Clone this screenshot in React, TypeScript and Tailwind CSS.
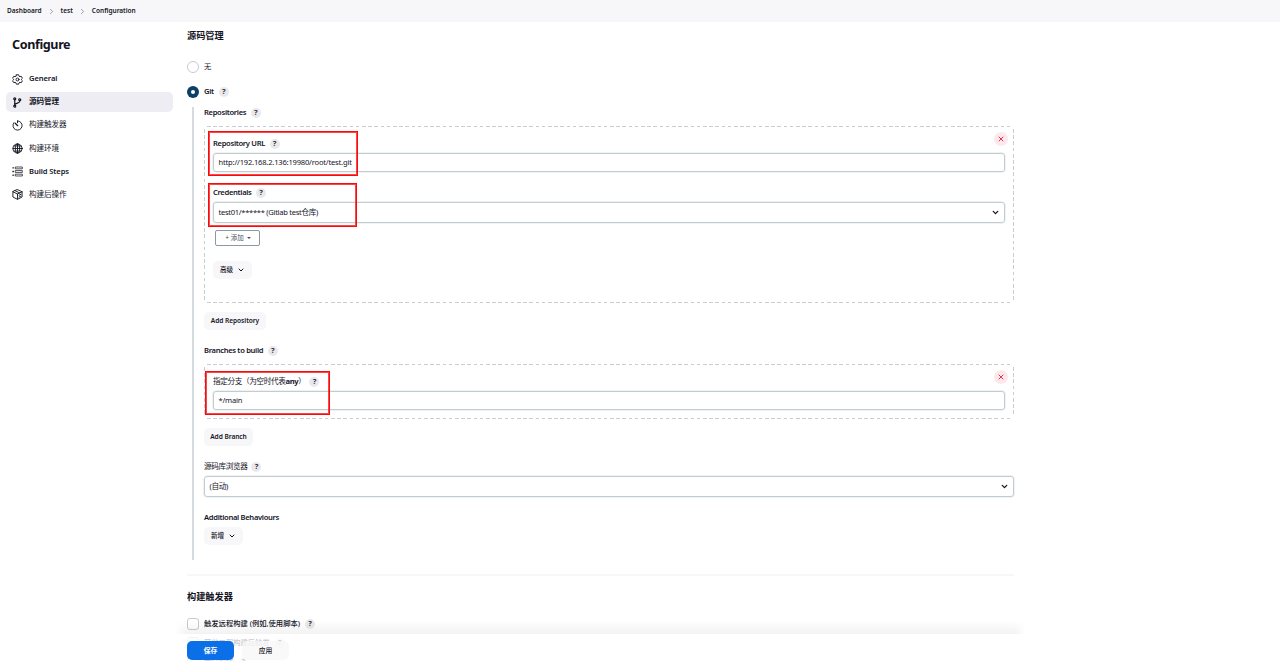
import type { ReactNode } from 'react'
import clsx from 'clsx'
import { ChevronDown, ChevronRight, X } from 'lucide-react'

const NAV_ITEMS = [
  { label: 'General', icon: 'gear', weight: 'font-semibold' },
  { label: '源码管理', icon: 'branch', weight: 'font-bold', active: true },
  { label: '构建触发器', icon: 'timer', weight: 'font-normal' },
  { label: '构建环境', icon: 'globe', weight: 'font-normal' },
  { label: 'Build Steps', icon: 'list', weight: 'font-semibold' },
  { label: '构建后操作', icon: 'cube', weight: 'font-normal' },
]

function NavIcon({ name }: { name: string }) {
  return (
    <svg
      viewBox="0 0 24 24"
      className="size-[11px] shrink-0"
      fill="none"
      stroke="currentColor"
      strokeWidth="2"
      strokeLinecap="round"
      strokeLinejoin="round"
    >
      {name === 'gear' && (
        <>
          <path d="M9.5 1.8h5l.8 3 2 1.1 3-.8 2.4 4.2-2.2 2.1v1.2l2.2 2.1-2.4 4.2-3-.8-2 1.1-.8 3h-5l-.8-3-2-1.1-3 .8-2.4-4.2 2.2-2.1v-1.2L1.3 9.3l2.4-4.2 3 .8 2-1.1z" />
          <circle cx="12" cy="12" r="3.2" />
        </>
      )}
      {name === 'branch' && (
        <g strokeWidth="2.6">
          <circle cx="6" cy="4" r="2.2" />
          <circle cx="6" cy="20" r="2.2" />
          <circle cx="17" cy="6" r="2.2" />
          <path d="M6 6.5v11M17 8.500c0 5-6 4-10.500 7.500" />
        </g>
      )}
      {name === 'timer' && (
        <>
          <path d="M12 2a10 10 0 1 1-8 4" />
          <path d="M12 2v4" />
          <path d="M7 7l5.5 5.5" strokeWidth="2.6" />
        </>
      )}
      {name === 'globe' && (
        <>
          <circle cx="12" cy="12" r="10" />
          <ellipse cx="12" cy="12" rx="4.8" ry="10" />
          <path d="M12 2v20M2 12h20M4 6.5h16M4 17.5h16" />
        </>
      )}
      {name === 'list' && (
        <>
          <path d="M2 4h1M2 12h1M2 20h1" strokeWidth="2.8" />
          <rect x="8" y="2.2" width="14.5" height="4" strokeWidth="1.6" />
          <rect x="8" y="10" width="14.5" height="4" strokeWidth="1.6" />
          <rect x="8" y="17.8" width="14.5" height="4" strokeWidth="1.6" />
        </>
      )}
      {name === 'cube' && (
        <>
          <path d="M12 1.5 22 6v11.5L12 22.500 2 17.500V6z" />
          <path d="M2 6l10 5 10-5M12 11v11M7 3.8l10 5M15.5 13.5l4-2M15.5 17.5l4-2" />
        </>
      )}
    </svg>
  )
}

function Help() {
  return (
    <span className="flex size-[10px] shrink-0 items-center justify-center rounded-full bg-[#e9e9ec] text-[7.5px] leading-none font-bold tracking-normal text-[#33333f]">
      ?
    </span>
  )
}

function Label({ children, help, cjk, className }: { children: ReactNode; help?: boolean; cjk?: boolean; className?: string }) {
  return (
    <div
      className={clsx(
        'flex h-[10px] items-center text-[7.6px] leading-none whitespace-nowrap',
        cjk ? 'gap-[4px] font-normal tracking-[-0.35px]' : 'gap-[4.5px] font-semibold tracking-[-0.32px]',
        className,
      )}
    >
      <span>{children}</span>
      {help && <Help />}
    </div>
  )
}

function Field({ children, select, className }: { children: ReactNode; select?: boolean; className?: string }) {
  return (
    <div
      className={clsx(
        'flex items-center justify-between rounded-[3px] border border-[#c3ccd1] pl-[4.5px] text-[7.6px] leading-none shadow-[0_0_0_0.5px_#dfe5e8]',
        select ? 'h-[21px] pr-[4px] tracking-[-0.3px]' : 'h-[19px] tracking-[-0.2px]',
        className,
      )}
    >
      <span>{children}</span>
      {select && <ChevronDown size={9} strokeWidth={3.5} />}
    </div>
  )
}

function GreyButton({ children, chevron, className }: { children: ReactNode; chevron?: boolean; className?: string }) {
  return (
    <button
      className={clsx(
        'flex h-[18px] items-center justify-center gap-[4px] rounded-[5px] bg-[#f7f7f9] text-[6.6px] leading-none whitespace-nowrap',
        chevron ? 'font-medium' : 'font-semibold tracking-[-0.05px]',
        className,
      )}
    >
      <span className="pt-px">{children}</span>
      {chevron && <ChevronDown size={8} strokeWidth={3} />}
    </button>
  )
}

// 6px dash rhythm on all four sides
function DashedBox({ children, className }: { children: ReactNode; className?: string }) {
  return (
    <div
      className={clsx(
        'relative px-[9px]',
        'bg-[repeating-linear-gradient(90deg,#c6ced3_0_3.7px,transparent_3.7px_6.2px),repeating-linear-gradient(90deg,#c6ced3_0_3.7px,transparent_3.7px_6.2px),repeating-linear-gradient(180deg,#c6ced3_0_3.7px,transparent_3.7px_6.2px),repeating-linear-gradient(180deg,#c6ced3_0_3.7px,transparent_3.7px_6.2px)]',
        'bg-[length:calc(100%-6px)_1px,calc(100%-6px)_1px,1px_calc(100%-6px),1px_calc(100%-6px)] bg-[position:3px_0,3px_100%,0_3px,100%_3px] bg-no-repeat',
        className,
      )}
    >
      <button className="absolute top-[6px] right-[6.5px] flex size-[14px] items-center justify-center rounded-full bg-[#fde8ec] text-[#e6324f]">
        <X size={8} strokeWidth={3} />
      </button>
      {children}
    </div>
  )
}

function Highlight({ className }: { className: string }) {
  return <div className={clsx('pointer-events-none absolute border border-[#fa0a0a] shadow-[inset_0_0_0_1px_rgba(250,10,10,0.75)]', className)} />
}

export default function App() {
  return (
    <div className="relative flex h-[661px] w-[1280px] flex-col overflow-hidden bg-white font-['Noto_Sans','Noto_Sans_CJK_SC',sans-serif] text-[#14141f]">
      <header className="flex h-[22px] shrink-0 items-center gap-[5px] bg-[#f7f7f9] pl-[7px] text-[6.5px] leading-none font-semibold">
        <span>Dashboard</span>
        <ChevronRight size={9} strokeWidth={1.8} className="text-[#777785]" />
        <span>test</span>
        <ChevronRight size={9} strokeWidth={1.8} className="text-[#777785]" />
        <span>Configuration</span>
      </header>

      <div className="flex min-h-0 flex-1">
        <aside className="w-[187px] shrink-0 pl-[6px]">
          <h1 className="mt-[16px] pl-[6px] text-[12.6px] leading-[14px] font-bold tracking-[-0.4px]">Configure</h1>
          <nav className="mt-[17px] flex w-[167px] flex-col gap-[3px]">
            {NAV_ITEMS.map((item) => (
              <a
                key={item.label}
                className={clsx(
                  'flex h-[20.12px] items-center gap-[6px] rounded-[5px] pl-[6px] text-[7.6px] leading-none tracking-[-0.1px]',
                  item.weight,
                  item.active && 'bg-[#ededf3]',
                )}
              >
                <NavIcon name={item.icon} />
                <span>{item.label}</span>
              </a>
            ))}
          </nav>
        </aside>

        <main className="w-[827px] shrink-0">
          <h2 className="mt-[8px] text-[9.2px] leading-[11px] font-bold">源码管理</h2>
          <div className="mt-[20px] flex h-[12px] items-center gap-[5px] text-[7.3px] leading-none">
            <span className="size-[12px] rounded-full border border-[#c3ccd1]" />
            无
          </div>
          <div className="mt-[12.5px] flex h-[12px] items-center gap-[5px] text-[7.6px] leading-none font-semibold tracking-[-0.3px]">
            <span className="flex size-[12px] items-center justify-center rounded-full bg-[#0b3f66]">
              <span className="size-[4px] rounded-full bg-white" />
            </span>
            Git
            <Help />
          </div>

          <div className="mt-[9.5px] ml-[5px] h-[453px] border-l-2 border-[#d5dbe0] pl-[10px]">
            <Label help className="pt-px">Repositories</Label>
            <DashedBox className="mt-[9px] h-[177px] pt-[13px]">
              <Label help>Repository URL</Label>
              <Field className="mt-[4px]">http://192.168.2.136:19980/root/test.git</Field>
              <Label help className="mt-[16px]">Credentials</Label>
              <Field select className="mt-[4px]">test01/****** (Gitlab test仓库)</Field>
              <button className="mt-[7px] ml-[2px] flex h-[16px] w-[45px] items-center justify-center gap-[3px] rounded-[2px] border border-[#8c98a4] pl-px text-[6.5px] leading-none text-[#4d545d]">
                <span>+ 添加</span>
                <svg viewBox="0 0 8 4" className="h-[2px] w-[4px]" fill="currentColor">
                  <path d="M0 0h8L4 4z" />
                </svg>
              </button>
              <GreyButton chevron className="mt-[15px] w-[39px]">高级</GreyButton>
              <Highlight className="top-[5px] left-[4px] h-[45px] w-[150px]" />
              <Highlight className="top-[57px] left-[4px] h-[44px] w-[149px]" />
            </DashedBox>
            <GreyButton className="mt-[9px] w-[62px]">Add Repository</GreyButton>

            <Label help className="mt-[16px]">Branches to build</Label>
            <DashedBox className="mt-[8px] h-[55px] pt-[13px]">
              <Label help cjk>
                指定分支（为空时代表<b>any</b>）
              </Label>
              <Field className="mt-[4px]">*/main</Field>
              <Highlight className="top-[7px] left-[1px] h-[44px] w-[125px]" />
            </DashedBox>
            <GreyButton className="mt-[9px] w-[49px]">Add Branch</GreyButton>

            <Label help cjk className="mt-[16px]">源码库浏览器</Label>
            <Field select className="mt-[4px]">(自动)</Field>
            <Label className="mt-[16px]">Additional Behaviours</Label>
            <GreyButton chevron className="mt-[4px] w-[39px]">新增</GreyButton>
          </div>

          <hr className="mt-[14px] h-[2px] border-0 bg-[#f7f7f8]" />
          <h2 className="mt-[15px] text-[9.2px] leading-[11px] font-bold">构建触发器</h2>
          <div className="mt-[16px] flex flex-col gap-[7px]">
            {['触发远程构建 (例如,使用脚本)', '其他工程构建后触发', '定时构建'].map((text) => (
              <div key={text} className="flex h-[12px] items-center gap-[5px] text-[7.3px] leading-none font-medium">
                <span className="size-[12px] rounded-[3px] border border-[#c3ccd1]" />
                {text}
                <Help />
              </div>
            ))}
          </div>
        </main>
      </div>

      {/* Sticky action bar */}
      <div className="absolute top-[620px] left-[175px] w-[851px]">
        <div className="h-[14px] bg-linear-to-b from-black/0 to-black/5 [mask-image:linear-gradient(90deg,transparent,#000_12px,#000_calc(100%-12px),transparent)]" />
        <div className="flex h-[27px] gap-[8px] bg-white/75 pt-[7px] pl-[12px]">
          <button className="h-[19px] w-[47px] rounded-[5px] bg-[#0b6fe8] pt-px text-[6.8px] leading-none font-bold text-white">保存</button>
          <button className="h-[19px] w-[47px] rounded-[5px] bg-[#f7f7f9]/80 pt-px text-[6.8px] leading-none font-medium">应用</button>
        </div>
      </div>
    </div>
  )
}
